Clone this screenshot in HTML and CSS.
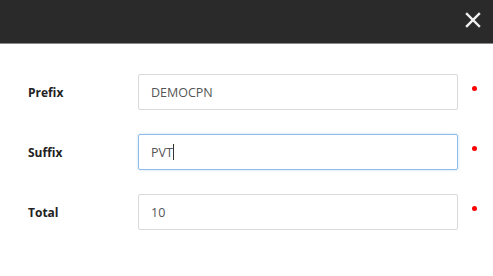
FILE: index.html
```html
<!DOCTYPE html>
<html lang="en">
<head>
  <meta charset="UTF-8">
  <meta name="viewport" content="width=device-width, initial-scale=1.0">
  <title>Coupon Series</title>
  <link rel="stylesheet" href="styles.css">
</head>
<body>
  <div class="modal">
    <div class="modal-header">
      <button type="button" class="close" aria-label="Close">
        <svg width="16" height="16" viewBox="0 0 16 16"><path d="M2 2 L14 14 M14 2 L2 14" stroke="#f2f2f2" stroke-width="2.4" stroke-linecap="square"/></svg>
      </button>
    </div>
    <form class="modal-body">
      <div class="row">
        <label class="label" for="prefix">Prefix</label>
        <div class="control">
          <input class="field" id="prefix" type="text" value="DEMOCPN">
        </div>
        <span class="req"></span>
      </div>
      <div class="row">
        <label class="label" for="suffix">Suffix</label>
        <div class="control">
          <input class="field focus" id="suffix" type="text" value="PVT">
          <span class="caret"></span>
        </div>
        <span class="req"></span>
      </div>
      <div class="row">
        <label class="label" for="total">Total</label>
        <div class="control">
          <input class="field" id="total" type="text" value="10">
        </div>
        <span class="req"></span>
      </div>
    </form>
  </div>
</body>
</html>
```

FILE: styles.css
```css
body {
  font-family: 'Open Sans', 'Liberation Sans', sans-serif;
  margin: 0;
  padding: 0;
  background: #fff;
}
.modal-header {
  height: 43px;
  background: #2a2a2a;
  border-bottom: 1px solid #8a8a8a;
  display: flex;
  justify-content: flex-end;
  align-items: center;
  padding-right: 10px;
}
.close {
  background: none;
  border: none;
  padding: 0;
  width: 20px;
  height: 20px;
  display: flex;
  align-items: center;
  justify-content: center;
  margin-bottom: 4px;
  cursor: pointer;
}
.modal-body {
  padding: 30px 0 0 28px;
}
.row {
  display: flex;
  align-items: center;
  height: 36px;
  margin-bottom: 24px;
}
.label {
  width: 110px;
  font-size: 12px;
  font-weight: bold;
  color: #222;
}
.control {
  position: relative;
  width: 320px;
  height: 36px;
}
.field {
  box-sizing: border-box;
  width: 100%;
  height: 36px;
  border: 1px solid #d9d9d9;
  border-radius: 2px;
  padding: 0 12px;
  font-family: inherit;
  font-size: 12.5px;
  color: #555;
  outline: none;
}
.field.focus {
  border-color: #8fbbe8;
  box-shadow: 0 0 3px rgba(102, 163, 224, 0.35);
}
.caret {
  position: absolute;
  left: 35px;
  top: 10px;
  width: 1px;
  height: 16px;
  background: #333;
}
.req {
  width: 5px;
  height: 5px;
  border-radius: 50%;
  background: #f00;
  margin-left: 14px;
  margin-bottom: 7px;
}
```
